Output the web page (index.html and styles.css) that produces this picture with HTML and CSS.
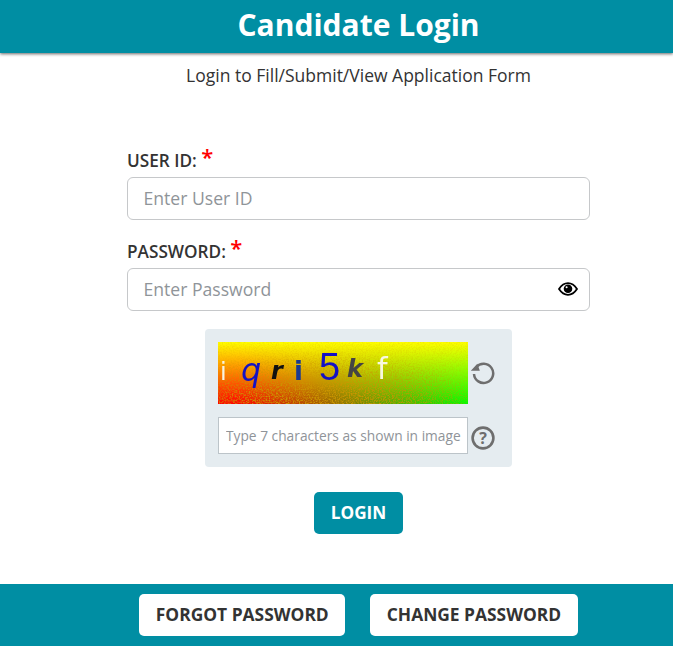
FILE: index.html
```html
<!DOCTYPE html>
<html lang="en">
<head>
  <meta charset="UTF-8" />
  <meta name="viewport" content="width=device-width, initial-scale=1.0"/>
  <title>Candidate Login</title>
  <link rel="stylesheet" href="styles.css">
</head>
<body>

  <header class="top-bar">
    <h1>Candidate Login</h1>
  </header>
  <p class="subtitle">Login to Fill/Submit/View Application Form</p>

  <form class="login-form">
    <label class="field-label">USER ID: <span class="req">*</span></label>
    <input class="field-input" type="text" placeholder="Enter User ID" />

    <label class="field-label second">PASSWORD: <span class="req">*</span></label>
    <div class="pass-wrap">
      <input class="field-input" type="password" placeholder="Enter Password" />
      <svg class="eye" width="20" height="14" viewBox="0 0 20 14">
        <path d="M1 7C3.5 3.2 6.5 1.2 10 1.2S16.500 3.200 19 7C16.500 10.800 13.500 12.800 10 12.800S3.500 10.800 1 7Z" fill="#fff" stroke="#000" stroke-width="1.800"/>
        <circle cx="10" cy="6.800" r="4.300" fill="#000"/>
        <circle cx="8.600" cy="5.200" r="1" fill="#fff"/>
      </svg>
    </div>

    <div class="captcha-box">
      <div class="captcha-row">
        <div class="captcha-img">
          <svg class="captcha-noise" width="250" height="62">
            <filter id="grain">
              <feTurbulence type="fractalNoise" baseFrequency="0.7" numOctaves="2" seed="4"/>
              <feColorMatrix values="0 0 0 0 0.6  0 0 0 0 0.3  0 0 0 0 0  3.2 0 0 0 -1.300"/>
            </filter>
            <rect width="250" height="62" filter="url(#grain)"/>
          </svg>
          <span class="cc c1">i</span>
          <span class="cc c2">q</span>
          <span class="cc c3">r</span>
          <span class="cc c4">i</span>
          <span class="cc c5">5</span>
          <span class="cc c6">k</span>
          <span class="cc c7">f</span>
        </div>
        <svg class="side-icon refresh" width="26" height="26" viewBox="0 0 26 26">
          <path d="M6.200 8.200A9.600 9.600 0 1 1 4 15" fill="none" stroke="#6e6e6e" stroke-width="2.500"/>
          <path d="M0.800 11.800L9.800 11.800L7.400 4.800Z" fill="#6e6e6e"/>
        </svg>
      </div>
      <div class="captcha-row second-row">
        <input class="captcha-input" type="text" placeholder="Type 7 characters as shown in image" />
        <svg class="side-icon help" width="26" height="26" viewBox="0 0 26 26">
          <circle cx="13" cy="13" r="10.400" fill="none" stroke="#6e6e6e" stroke-width="2.600"/>
          <text x="13" y="19" text-anchor="middle" class="help-q">?</text>
        </svg>
      </div>
    </div>

    <div class="login-row">
      <button type="button" class="login-btn">LOGIN</button>
    </div>
  </form>

  <footer class="bottom-bar">
    <button type="button" class="white-btn">FORGOT PASSWORD</button>
    <button type="button" class="white-btn">CHANGE PASSWORD</button>
  </footer>

</body>
</html>
```

FILE: styles.css
```css
* { box-sizing: border-box; }
html { overflow: hidden; }
body {
  margin: 0;
  font-family: 'Open Sans', sans-serif;
  background: #fff;
  color: #333;
  min-height: 646px;
}

.top-bar {
  height: 53px;
  padding-left: 44px;
  background: #008ea3;
  box-shadow: 0 1px 3px rgba(0, 0, 0, 0.6);
  text-align: center;
}

.top-bar h1 {
  margin: 0;
  font-size: 30px;
  line-height: 50px;
  font-weight: 700;
  color: #fff;
}

.subtitle {
  margin: 10px 0 0;
  padding-left: 44px;
  height: 24px;
  font-size: 17.5px;
  line-height: 24px;
  text-align: center;
}

.login-form {
  width: 463px;
  margin: 59px 0 0 127px;
}

.field-label {
  display: block;
  height: 31px;
  font-size: 17.2px;
  line-height: 30px;
  font-weight: 600;
}

.field-label.second { margin-top: 17px; }

.req {
  color: #f00;
  font-size: 22px;
  line-height: 20px;
  vertical-align: 2px;
}

.field-input {
  display: block;
  width: 100%;
  height: 43px;
  padding: 0 15.500px 2px;
  border: 1px solid #c6c8ca;
  border-radius: 6px;
  font-family: inherit;
  font-size: 17.6px;
  color: #333;
  background: #fff;
}

.field-input::placeholder,
.captcha-input::placeholder {
  color: #8f9499;
  opacity: 1;
}

.pass-wrap { position: relative; }

.eye {
  position: absolute;
  top: 14px;
  right: 12px;
}

.captcha-box {
  width: 307px;
  height: 138px;
  margin: 18px 0 0 78px;
  padding: 13px;
  background: #e5ecf0;
  border-radius: 4px;
}

.captcha-row {
  display: flex;
  align-items: center;
  gap: 2px;
}

.second-row { margin-top: 13px; }

.captcha-img {
  position: relative;
  width: 250px;
  height: 62px;
  overflow: hidden;
  background:
    linear-gradient(to bottom, #ff0 0%, rgba(255, 255, 0, 0) 100%),
    linear-gradient(to right, #f00 0%, #f00 8%, #0f0 100%);
}

.captcha-noise {
  position: absolute;
  top: 0;
  left: 0;
  -webkit-mask-image: radial-gradient(ellipse 70% 85% at 40% 100%, #000 35%, rgba(0, 0, 0, 0.15) 100%);
  mask-image: radial-gradient(ellipse 70% 85% at 40% 100%, #000 35%, rgba(0, 0, 0, 0.15) 100%);
}

.cc {
  position: absolute;
  font-family: 'DejaVu Sans', sans-serif;
  line-height: 1;
  filter: blur(0.4px);
}

.c1 { left: 2px; top: 18px; font-size: 24px; color: #f8f4e0; }
.c2 { left: 23px; top: 12px; font-size: 32px; font-style: italic; color: #1411c4; }
.c3 { left: 53px; top: 17px; font-size: 24px; font-style: italic; font-weight: 700; color: #111; }
.c4 { left: 76px; top: 16px; font-size: 26px; font-weight: 700; color: #1a3a90; }
.c5 { left: 101px; top: 6px; font-size: 38px; font-family: 'Liberation Sans', sans-serif; color: #1411c4; }
.c6 { left: 129px; top: 15px; font-size: 24px; font-style: italic; font-weight: 700; color: #444; }
.c7 { left: 159px; top: 12px; font-size: 30px; color: #f8f8e0; }

.side-icon { flex: none; }
.refresh { margin-bottom: 2px; }
.help { margin-top: 5px; }

.captcha-input {
  width: 250px;
  height: 37px;
  padding: 0 0 0 7px;
  border: 1px solid #bcc4c9;
  font-family: inherit;
  font-size: 13.750px;
  background: #fff;
}

.help-q {
  font-family: 'Open Sans', sans-serif;
  font-size: 16px;
  font-weight: 700;
  fill: #6e6e6e;
}

.login-row {
  display: flex;
  justify-content: center;
  margin-top: 25px;
}

.login-btn {
  width: 89px;
  height: 42px;
  padding: 0 0 2px;
  border: none;
  border-radius: 5px;
  background: #008ea3;
  color: #fff;
  font-family: inherit;
  font-size: 17.2px;
  font-weight: 700;
}

.bottom-bar {
  display: flex;
  justify-content: center;
  gap: 25px;
  height: 62px;
  margin-top: 50px;
  padding: 10px 0 0 44px;
  background: #008ea3;
}

.white-btn {
  height: 42px;
  padding: 0 16.500px 2px;
  border: none;
  border-radius: 5px;
  background: #fff;
  color: #333;
  font-family: inherit;
  font-size: 17.4px;
  font-weight: 700;
}
```
